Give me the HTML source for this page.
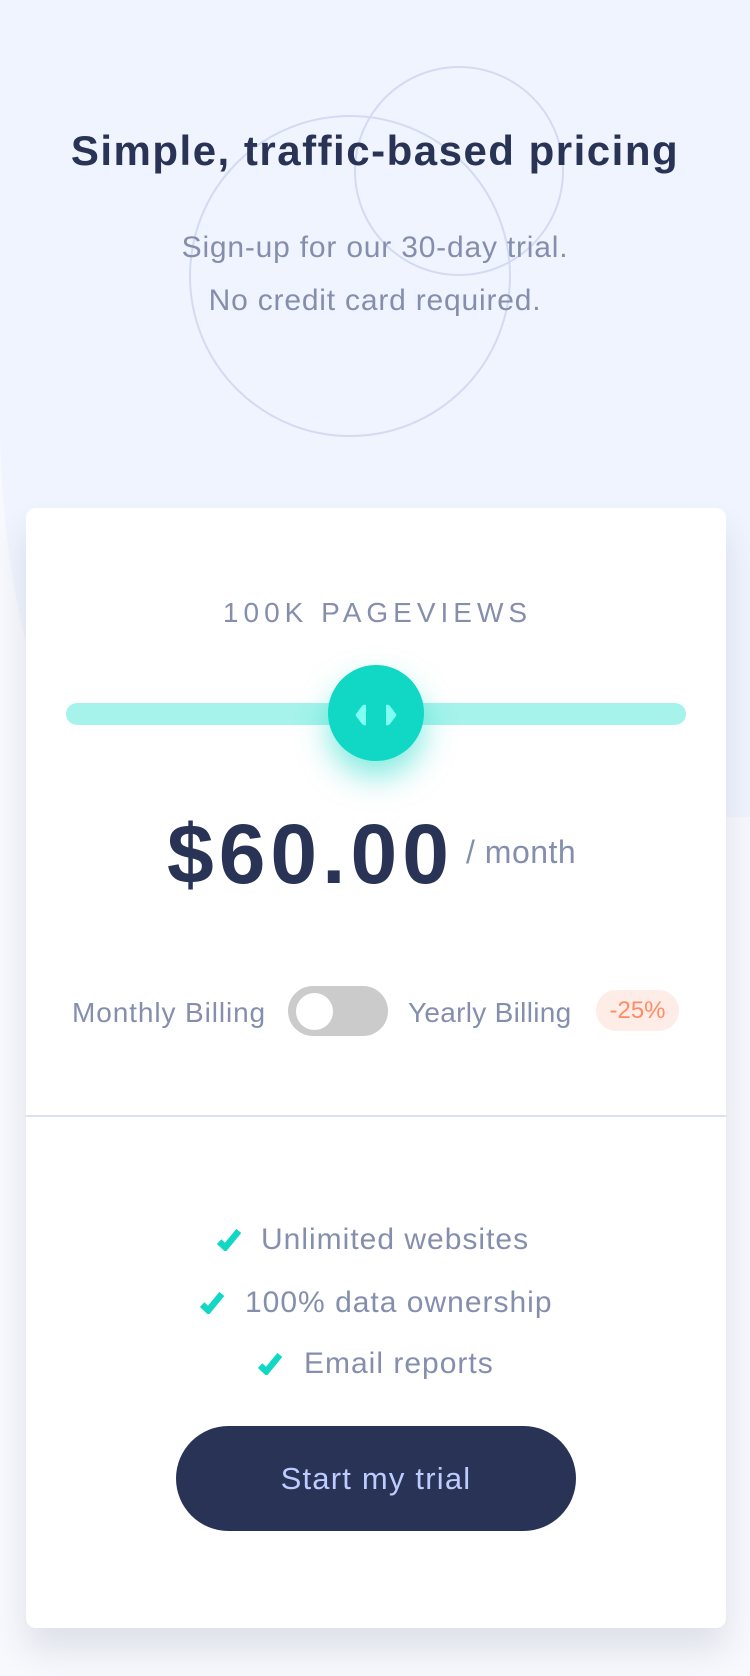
<!DOCTYPE html>
<html><head><meta charset="utf-8"><style>
*{margin:0;padding:0;box-sizing:border-box}
html,body{width:750px;height:1676px;overflow:hidden}
body{background:#f8f9fd;font-family:"Liberation Sans",sans-serif;position:relative}
.bg{position:absolute;left:0;top:0;width:750px;height:817px;background:#f0f4fe;border-bottom-left-radius:150px 400px}
.t{position:absolute;line-height:1;white-space:nowrap}
.c{left:0;width:750px;text-align:center}
.card{position:absolute;left:26px;top:508px;width:700px;height:1120px;background:#fff;border-radius:10px;box-shadow:0 22px 34px rgba(40,50,90,0.12)}
</style></head><body>
<div class="bg"></div>
<svg style="position:absolute;left:0;top:0" width="750" height="500">
<circle cx="350" cy="276" r="160" fill="none" stroke="#d4daf3" stroke-width="2"/>
<circle cx="459" cy="171" r="104" fill="none" stroke="#d4daf3" stroke-width="2"/>
</svg>
<div class="t c" style="top:130px;font-size:42px;font-weight:bold;color:#293356;letter-spacing:1.5px">Simple, traffic-based pricing</div>
<div class="t c" style="top:233px;font-size:30px;color:#858fad;letter-spacing:0.8px">Sign-up for our 30-day trial.</div>
<div class="t c" style="top:286px;font-size:30px;color:#858fad;letter-spacing:0.8px">No credit card required.</div>
<div class="card"></div>
<div class="t c" style="top:599px;font-size:28px;color:#858fad;letter-spacing:5px;padding-left:5px">100K PAGEVIEWS</div>
<div style="position:absolute;left:66px;top:703px;width:620px;height:22px;border-radius:11px;background:#a5f3eb"></div>
<div style="position:absolute;left:328px;top:665px;width:96px;height:96px;border-radius:50%;background:#10d8c4;box-shadow:0 16px 30px rgba(16,216,196,0.5)"></div>
<svg style="position:absolute;left:350px;top:700px" width="52" height="30">
<path d="M16 5 L16 25 Q14 26 12 24 L6 16 Q5 15 6 14 L12 6 Q14 4 16 5Z" fill="#80fff3"/>
<path d="M36 5 L36 25 Q38 26 40 24 L46 16 Q47 15 46 14 L40 6 Q38 4 36 5Z" fill="#80fff3"/>
</svg>
<div class="t" style="left:167px;top:812px;font-size:84px;font-weight:bold;color:#293356;letter-spacing:5px">$60.00</div>
<div class="t" style="left:466px;top:836px;font-size:32px;color:#858fad;letter-spacing:0.5px">/ month</div>
<div class="t" style="left:72px;top:999px;font-size:28px;color:#858fad;letter-spacing:0.9px">Monthly Billing</div>
<div style="position:absolute;left:288px;top:986px;width:100px;height:50px;border-radius:25px;background:#cbcbcb"></div>
<div style="position:absolute;left:296px;top:993px;width:37px;height:37px;border-radius:50%;background:#fff"></div>
<div class="t" style="left:408px;top:999px;font-size:28px;color:#858fad;letter-spacing:0.3px">Yearly Billing</div>
<div style="position:absolute;left:596px;top:990px;width:83px;height:41px;border-radius:21px;background:#feece7;color:#ff8c66;font-size:24px;display:flex;align-items:center;justify-content:center">-25%</div>
<div style="position:absolute;left:26px;top:1115px;width:700px;height:2px;background:#dbe1f5"></div>
<svg style="position:absolute;left:217px;top:1229px" width="24" height="22" viewBox="0 0 9 8"><path d="M0.8 4.6 L3.1 6.8 L8.2 0.6" fill="none" stroke="#10d8c4" stroke-width="2.4"/></svg>
<div class="t" style="left:261px;top:1225px;font-size:30px;color:#858fad;letter-spacing:1px">Unlimited websites</div>
<svg style="position:absolute;left:200px;top:1292px" width="24" height="22" viewBox="0 0 9 8"><path d="M0.8 4.6 L3.1 6.8 L8.2 0.6" fill="none" stroke="#10d8c4" stroke-width="2.4"/></svg>
<div class="t" style="left:245px;top:1288px;font-size:30px;color:#858fad;letter-spacing:1px">100% data ownership</div>
<svg style="position:absolute;left:258px;top:1353px" width="24" height="22" viewBox="0 0 9 8"><path d="M0.8 4.6 L3.1 6.8 L8.2 0.6" fill="none" stroke="#10d8c4" stroke-width="2.4"/></svg>
<div class="t" style="left:304px;top:1349px;font-size:30px;color:#858fad;letter-spacing:1px">Email reports</div>
<div style="position:absolute;left:176px;top:1426px;width:400px;height:105px;border-radius:53px;background:#293356;color:#bdccff;font-size:31px;letter-spacing:1.2px;display:flex;align-items:center;justify-content:center">Start my trial</div>
</body></html>
